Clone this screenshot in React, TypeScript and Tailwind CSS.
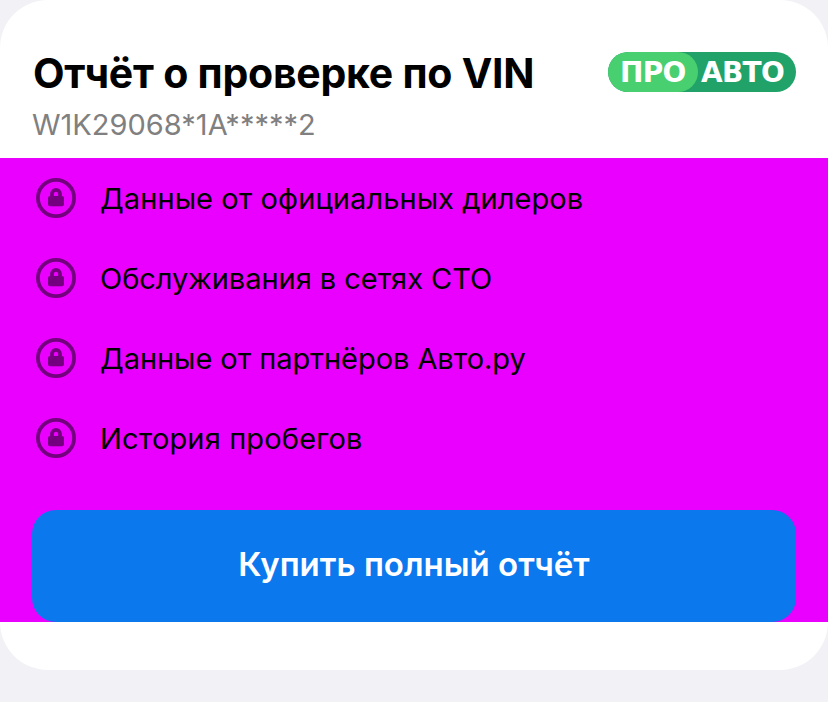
const rows = [
  { text: 'Данные от официальных дилеров', tracking: 'tracking-[0.08px]' },
  { text: 'Обслуживания в сетях СТО', tracking: 'tracking-[-0.04px]' },
  { text: 'Данные от партнёров Авто.ру', tracking: 'tracking-[-0.06px]' },
  { text: 'История пробегов', tracking: 'tracking-[0.15px]' },
];

function Lock() {
  return (
    <svg width="40" height="40" viewBox="0 0 40 40" fill="none" className="shrink-0 text-[#75007f]">
      <circle cx="20" cy="20" r="18.1" stroke="currentColor" strokeWidth="3.8" />
      <rect x="12" y="18" width="16" height="10.3" rx="2" fill="currentColor" />
      <path d="M16 19v-3.2a4 4 0 0 1 8 0V19" stroke="currentColor" strokeWidth="3.8" />
    </svg>
  );
}

export default function App() {
  return (
    <div className="h-[702px] w-[828px] bg-[#f2f1f6] font-['Inter',sans-serif]">
      <main className="flex h-[670px] flex-col overflow-hidden rounded-[48px] bg-white">
        <header className="flex h-[158px] shrink-0 justify-between px-8 pt-[52px]">
          <div>
            <h1 className="pl-px text-[41px] leading-[43px] font-bold tracking-[-0.25px] whitespace-nowrap text-black">Отчёт о проверке по VIN</h1>
            <p className="mt-3 text-[29px] leading-[36px] text-[#808080] [font-feature-settings:'calt'_0]">W1K29068*1A*****2</p>
          </div>
          <div className="flex h-10 w-[188px] overflow-hidden rounded-full bg-[#20a268] font-['DejaVu_Sans',sans-serif] text-[28px] leading-[41px] font-bold tracking-[-0.7px] text-white">
            <span className="w-[89.5px] shrink-0 rounded-full bg-[#48cf70] pl-[12px]">ПРО</span>
            <span className="pl-[3.5px]">АВТО</span>
          </div>
        </header>
        <section className="flex h-[464px] shrink-0 flex-col bg-[#ea00ff]">
          <ul className="flex h-[352px] flex-col gap-10 pt-5 pl-9">
            {rows.map((r) => (
              <li key={r.text} className="flex h-10 items-center gap-6">
                <Lock />
                <span className={`pt-0.5 text-[29px] whitespace-nowrap text-black ${r.tracking}`}>{r.text}</span>
              </li>
            ))}
          </ul>
          <button className="mx-8 h-28 rounded-3xl bg-[#0b78ee] pb-0.5 text-[33px] font-semibold text-white">Купить полный отчёт</button>
        </section>
      </main>
    </div>
  );
}
